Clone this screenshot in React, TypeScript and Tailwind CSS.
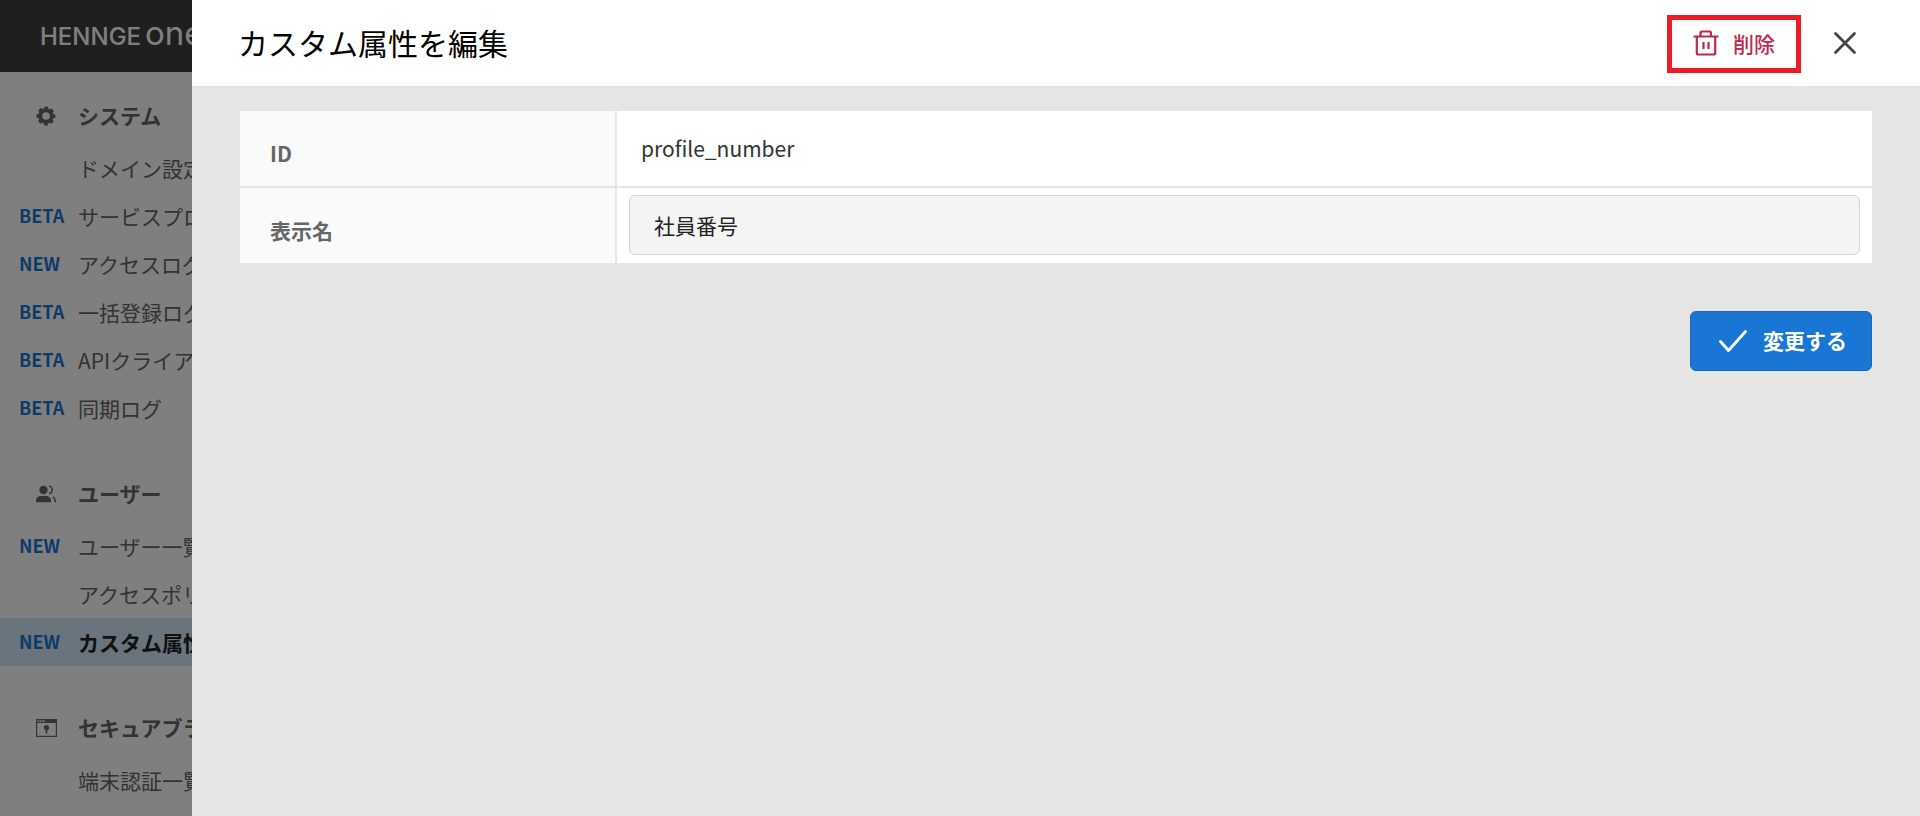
import React from "react";

type Item = { label: string; tag?: string; active?: boolean };
type Section = { title: string; icon: React.ReactNode; items: Item[] };

const GearIcon = () => (
  <svg viewBox="0 0 20 20" className="size-5" fill="none" stroke="currentColor" aria-hidden="true">
    <circle cx="10" cy="10" r="5.8" strokeWidth="4" />
    <circle cx="10" cy="10" r="8.1" strokeWidth="2.6" strokeDasharray="3.8 2.562" strokeDashoffset="1.9" />
  </svg>
);

const UsersIcon = () => (
  <svg viewBox="0 0 20 20" className="size-5" fill="currentColor" aria-hidden="true">
    <circle cx="7.5" cy="6" r="4.2" />
    <path d="M0 18.2v-1.4c0-3.2 2.2-4.8 5-4.8h5c2.800 0 5 1.600 5 4.800v1.400z" />
    <path d="M13 2.300c4.200-.2 4.200 7.400 0 7.200M17 12.800c1.600 1.100 2.300 2.600 2.400 5.400" fill="none" stroke="currentColor" strokeWidth="1.500" />
  </svg>
);

const BrowserLockIcon = () => (
  <svg viewBox="0 0 21 18" className="h-[18px] w-[21px]" aria-hidden="true">
    <rect x="0.600" y="0.600" width="19.800" height="16.800" fill="none" stroke="currentColor" strokeWidth="1.200" />
    <path d="M9 0h12v4H0V3h9z" fill="currentColor" />
    <path d="M3 .5v3M6 .5v3M9 .5v3" stroke="currentColor" strokeWidth="1" />
    <circle cx="10.500" cy="8.600" r="2.600" fill="currentColor" />
    <path d="M9.700 10h1.600v4.500H9.700z" fill="currentColor" />
  </svg>
);

const TrashIcon = () => (
  <svg viewBox="0 0 26 26" className="size-[26px]" fill="none" stroke="currentColor" strokeWidth="2.200" strokeLinejoin="round" aria-hidden="true">
    <path d="M.5 6.500h25M3.800 6.500V23q0 1.500 1.500 1.500h15.400q1.500 0 1.500-1.500V6.500M7.500 6.500V3q0-1.500 1.500-1.500h7.500q1.500 0 1.500 1.500v3.500" />
    <path d="M10.500 12v7M15.500 12v7" />
  </svg>
);

const sections: Section[] = [
  {
    title: "システム",
    icon: <GearIcon />,
    items: [
      { label: "ドメイン設定" },
      { label: "サービスプロバイダ", tag: "BETA" },
      { label: "アクセスログ", tag: "NEW" },
      { label: "一括登録ログ", tag: "BETA" },
      { label: "APIクライアント", tag: "BETA" },
      { label: "同期ログ", tag: "BETA" },
    ],
  },
  {
    title: "ユーザー",
    icon: <UsersIcon />,
    items: [
      { label: "ユーザー一覧", tag: "NEW" },
      { label: "アクセスポリシー" },
      { label: "カスタム属性", tag: "NEW", active: true },
    ],
  },
  {
    title: "セキュアブラウザ",
    icon: <BrowserLockIcon />,
    items: [{ label: "端末認証一覧" }],
  },
];

function Sidebar() {
  return (
    <nav className="flex w-80 flex-col gap-[38px] pt-5">
      {sections.map((s) => (
        <section key={s.title} className="flex flex-col gap-1">
          <h2 className="flex h-12 items-center pb-0.5 font-bold text-[#666]">
            <span className="flex w-[78px] shrink-0 pt-0.5 pl-9">{s.icon}</span>
            {s.title}
          </h2>
          <ul>
            {s.items.map((i) => (
              <li key={i.label}>
                <a
                  href="#"
                  className={
                    i.active
                      ? "flex h-12 items-center bg-[#d2e8fa] pb-px font-bold whitespace-nowrap text-[#222]"
                      : "flex h-12 items-center pb-px whitespace-nowrap text-[#666]"
                  }
                >
                  <span className="w-[78px] shrink-0 pb-0.5 pl-[19px] text-lg font-bold text-[#1976d4]">{i.tag}</span>
                  {i.label}
                </a>
              </li>
            ))}
          </ul>
        </section>
      ))}
    </nav>
  );
}

function Drawer() {
  return (
    <div role="dialog" aria-labelledby="drawer-title" className="flex w-9/10 flex-col bg-[#e5e5e5]">
      <header className="flex h-[86px] shrink-0 items-center justify-between bg-white pr-[61px] pl-[46px]">
        <h1 id="drawer-title" className="pb-0.5 text-[30px] text-black">カスタム属性を編集</h1>
        <div className="flex items-center gap-[30px]">
          <button type="button" className="mt-0.5 flex h-[58px] items-center gap-3.5 border-[5px] border-[#ed1c24] px-[21px] pb-0.5 font-medium text-[#c0284a]">
            <TrashIcon />
            削除
          </button>
          <button type="button" aria-label="閉じる" className="text-[#444]">
            <svg viewBox="0 0 28 28" className="size-7" stroke="currentColor" strokeWidth="2.800" strokeLinecap="round" aria-hidden="true">
              <path d="M4.500 4.500l19 19M23.500 4.500l-19 19" />
            </svg>
          </button>
        </div>
      </header>
      <form className="flex flex-col items-end gap-12 px-12 pt-[25px]" onSubmit={(e) => e.preventDefault()}>
        <table className="w-full table-fixed border-separate border-spacing-0 bg-white text-left">
          <tbody>
            <tr className="h-[77px]">
              <th scope="row" className="w-[23.1%] border-r-2 border-b-2 border-[#e5e5e5] bg-[#fafafa] pt-2 pl-[30px] font-bold text-[#666]">ID</th>
              <td className="border-b-2 border-[#e5e5e5] pb-0.5 pl-6 text-[#333]">profile_number</td>
            </tr>
            <tr className="h-[75px]">
              <th scope="row" className="border-r-2 border-[#e5e5e5] bg-[#fafafa] pt-2 pl-[30px] font-bold text-[#666]">
                <label htmlFor="display-name">表示名</label>
              </th>
              <td className="px-3 pb-px">
                <input
                  id="display-name"
                  type="text"
                  defaultValue="社員番号"
                  className="block h-[60px] w-full rounded-md border border-[#d4d4d4] bg-[#f4f4f4] px-6 text-[#222]"
                />
              </td>
            </tr>
          </tbody>
        </table>
        <button type="submit" className="flex h-[60px] items-center gap-4 rounded-md border border-[#1769b8] bg-[#1976d4] pr-6 pl-7 font-bold text-white">
          <svg viewBox="0 0 28 24" className="h-6 w-7" fill="none" stroke="currentColor" strokeWidth="2.800" strokeLinecap="round" strokeLinejoin="round" aria-hidden="true">
            <path d="M1.500 12.500l8 9L26.500 2.500" />
          </svg>
          <span className="pb-0.5">変更する</span>
        </button>
      </form>
    </div>
  );
}

export default function App() {
  return (
    <div className="relative h-screen overflow-hidden bg-white font-['Noto_Sans_CJK_JP',sans-serif] text-[21px] leading-8">
      <header className="flex h-[72px] items-baseline gap-1 bg-[#3e3e3e] pt-[17px] pl-10 font-[Inter,sans-serif] text-white">
        <span className="text-2xl font-medium">HENNGE</span>
        <span className="text-[33px]">one</span>
      </header>
      <Sidebar />
      <div className="absolute inset-0 flex justify-end bg-black/50">
        <Drawer />
      </div>
    </div>
  );
}
